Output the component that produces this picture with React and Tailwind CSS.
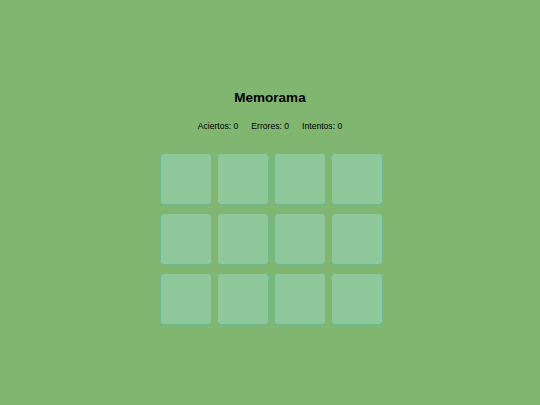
export default function App() {
  const cards = Array.from({ length: 12 });
  return (
    <div
      className="w-[540px] h-[405px] bg-[#80b670] flex flex-col items-center pt-[90px]"
      style={{ fontFamily: '"Liberation Sans", Arial, sans-serif' }}
    >
      <h1 className="text-[13.5px] leading-[16px] h-[16px] font-bold text-black m-0">Memorama</h1>
      <div className="mt-[15px] flex gap-[13px] text-[8.6px] leading-[10px] text-black">
        <span>Aciertos: 0</span>
        <span>Errores: 0</span>
        <span>Intentos: 0</span>
      </div>
      <div className="mt-[22px] ml-[3px] grid grid-cols-[repeat(4,52px)] gap-x-[5px] gap-y-[8px]">
        {cards.map((_, i) => (
          <div
            key={i}
            className="w-[52px] h-[52px] rounded-[4px] bg-[#8ec89a] border border-[#6cb994]"
          />
        ))}
      </div>
    </div>
  );
}
